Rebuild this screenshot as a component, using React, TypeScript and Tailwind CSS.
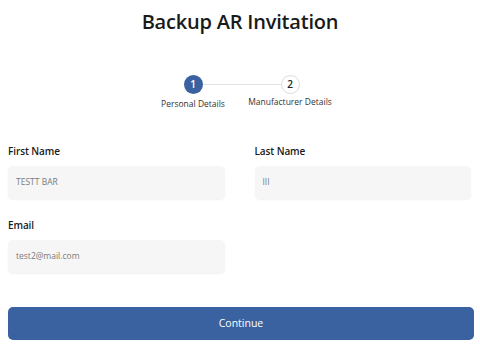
import React from "react";

export default function App() {
  const font = { fontFamily: '"Open Sans", "Noto Sans", sans-serif' };
  return (
    <div className="w-[480px] h-[352px] bg-white px-2 pt-[7px]" style={font}>
      <h1 className="text-center text-[20px] leading-[30px] font-semibold tracking-[-0.2px] text-[#1a1a1a]">
        Backup AR Invitation
      </h1>
      <div className="mt-[38px] flex justify-center pl-[3px]">
        <div className="relative flex">
          <div className="absolute left-[58px] right-[58px] top-[9px] h-px bg-[#e2e2e2]" />
          <div className="relative flex w-[97px] flex-col items-center">
            <div className="flex h-[19px] w-[19px] items-center justify-center rounded-full bg-[#3a62a0] text-[10px] font-semibold text-white">
              1
            </div>
            <div className="mt-[3px] whitespace-nowrap text-[8.5px] leading-[14px] text-[#333]">Personal Details</div>
          </div>
          <div className="relative flex w-[97px] flex-col items-center">
            <div className="flex h-[19px] w-[19px] items-center justify-center rounded-full border border-[#dcdcdc] bg-white text-[10px] font-semibold text-[#222]">
              2
            </div>
            <div className="mt-[1px] whitespace-nowrap text-[8.5px] leading-[14px] text-[#333]">Manufacturer Details</div>
          </div>
        </div>
      </div>
      <div className="mt-[32px] grid grid-cols-2 gap-x-[30px] pr-[1px]">
        <div>
          <div className="text-[10px] leading-[16px] font-semibold tracking-[-0.1px] text-[#1a1a1a]">First Name</div>
          <div className="mt-[7px] flex h-[33px] items-center rounded-[5px] bg-[#f6f6f6] px-2 text-[8.5px] text-[#7a7a7a] shadow-[0_1px_2px_rgba(0,0,0,0.06)]">
            TESTT BAR
          </div>
        </div>
        <div>
          <div className="text-[10px] leading-[16px] font-semibold tracking-[-0.1px] text-[#1a1a1a]">Last Name</div>
          <div className="mt-[7px] flex h-[33px] items-center rounded-[5px] bg-[#f6f6f6] px-2 text-[8.5px] text-[#7a7a7a] shadow-[0_1px_2px_rgba(0,0,0,0.06)]">
            III
          </div>
        </div>
        <div className="mt-[18px]">
          <div className="text-[10px] leading-[16px] font-semibold tracking-[-0.1px] text-[#1a1a1a]">Email</div>
          <div className="mt-[7px] flex h-[33px] items-center rounded-[5px] bg-[#f6f6f6] px-2 text-[8.5px] text-[#7a7a7a] shadow-[0_1px_2px_rgba(0,0,0,0.06)]">
            test2@mail.com
          </div>
        </div>
      </div>
      <button className="mt-[34px] flex h-[33px] w-[466px] items-center justify-center rounded-[5px] bg-[#3a62a0] text-[10.5px] text-white">
        Continue
      </button>
    </div>
  );
}
